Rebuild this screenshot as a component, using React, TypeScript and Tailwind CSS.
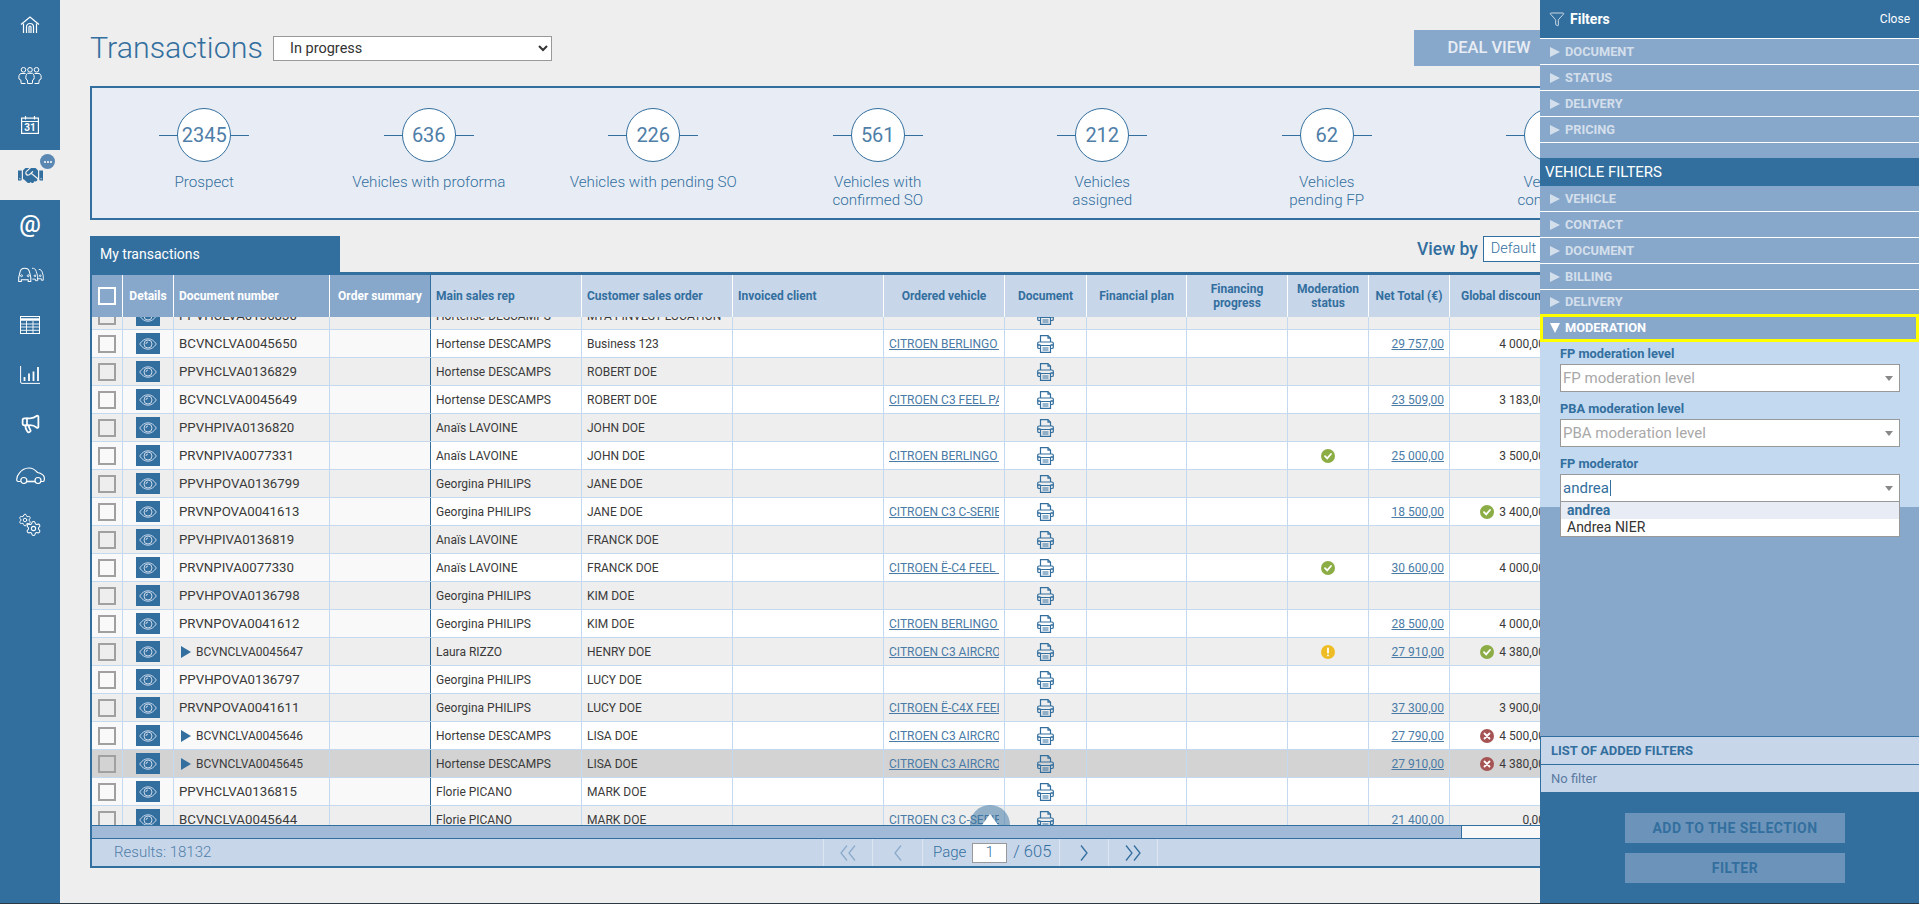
import { FaHandshake } from "react-icons/fa";
import { Filter, Megaphone, Settings } from "lucide-react";

const stats = [
  { n: "2345", l: ["Prospect"] },
  { n: "636", l: ["Vehicles with proforma"] },
  { n: "226", l: ["Vehicles with pending SO"] },
  { n: "561", l: ["Vehicles with", "confirmed SO"] },
  { n: "212", l: ["Vehicles", "assigned"] },
  { n: "62", l: ["Vehicles", "pending FP"] },
  { n: "48", l: ["Vehicles", "confirmed"] },
];

const HORTENSE = "Hortense DESCAMPS";
const ANAIS = "Anaïs LAVOINE";
const GEORGINA = "Georgina PHILIPS";

type Row = {
  doc: string;
  rep: string;
  client: string;
  vehicle?: string;
  net?: string;
  mod?: "ok" | "warn";
  disc?: string;
  discIcon?: "ok" | "ko";
  tree?: boolean;
  active?: boolean;
};

const rows: Row[] = [
  { doc: "PPVHCLVA0136830", rep: HORTENSE, client: "MTA FINVEST LOCATION" },
  { doc: "BCVNCLVA0045650", rep: HORTENSE, client: "Business 123", vehicle: "CITROEN BERLINGO VAN", net: "29 757,00", disc: "4 000,00" },
  { doc: "PPVHCLVA0136829", rep: HORTENSE, client: "ROBERT DOE" },
  { doc: "BCVNCLVA0045649", rep: HORTENSE, client: "ROBERT DOE", vehicle: "CITROEN C3 FEEL PACK", net: "23 509,00", disc: "3 183,00" },
  { doc: "PPVHPIVA0136820", rep: ANAIS, client: "JOHN DOE" },
  { doc: "PRVNPIVA0077331", rep: ANAIS, client: "JOHN DOE", vehicle: "CITROEN BERLINGO VAN", mod: "ok", net: "25 000,00", disc: "3 500,00" },
  { doc: "PPVHPOVA0136799", rep: GEORGINA, client: "JANE DOE" },
  { doc: "PRVNPOVA0041613", rep: GEORGINA, client: "JANE DOE", vehicle: "CITROEN C3 C-SERIES", net: "18 500,00", disc: "3 400,00", discIcon: "ok" },
  { doc: "PPVHPIVA0136819", rep: ANAIS, client: "FRANCK DOE" },
  { doc: "PRVNPIVA0077330", rep: ANAIS, client: "FRANCK DOE", vehicle: "CITROEN Ë-C4 FEEL PACK", mod: "ok", net: "30 600,00", disc: "4 000,00" },
  { doc: "PPVHPOVA0136798", rep: GEORGINA, client: "KIM DOE" },
  { doc: "PRVNPOVA0041612", rep: GEORGINA, client: "KIM DOE", vehicle: "CITROEN BERLINGO VAN", net: "28 500,00", disc: "4 000,00" },
  { doc: "BCVNCLVA0045647", tree: true, rep: "Laura RIZZO", client: "HENRY DOE", vehicle: "CITROEN C3 AIRCROSS", mod: "warn", net: "27 910,00", disc: "4 380,00", discIcon: "ok" },
  { doc: "PPVHPOVA0136797", rep: GEORGINA, client: "LUCY DOE" },
  { doc: "PRVNPOVA0041611", rep: GEORGINA, client: "LUCY DOE", vehicle: "CITROEN Ë-C4X FEEL PACK", net: "37 300,00", disc: "3 900,00" },
  { doc: "BCVNCLVA0045646", tree: true, rep: HORTENSE, client: "LISA DOE", vehicle: "CITROEN C3 AIRCROSS", net: "27 790,00", disc: "4 500,00", discIcon: "ko" },
  { doc: "BCVNCLVA0045645", tree: true, active: true, rep: HORTENSE, client: "LISA DOE", vehicle: "CITROEN C3 AIRCROSS", net: "27 910,00", disc: "4 380,00", discIcon: "ko" },
  { doc: "PPVHCLVA0136815", rep: "Florie PICANO", client: "MARK DOE" },
  { doc: "BCVNCLVA0045644", rep: "Florie PICANO", client: "MARK DOE", vehicle: "CITROEN C3 C-SERIES", net: "21 400,00", disc: "0,00" },
];

function HomeIcon() {
  return (
    <svg width="20" height="18" viewBox="0 0 20 18" fill="none" stroke="#fff" strokeWidth="1.2">
      <path d="M1 8.500 10 1l9 7.500" />
      <path d="M3.500 7.500V17M16.500 7.500V17M6.500 17V11a3.500 3.500 0 0 1 7 0v6M9 17v-6a1 1 0 0 1 2 0v6" />
    </svg>
  );
}

function PeopleIcon() {
  return (
    <svg width="24" height="17" viewBox="0 0 24 17" fill="none" stroke="#fff" strokeWidth="1">
      <circle cx="5.500" cy="2.800" r="2.300" />
      <circle cx="12" cy="2.800" r="2.300" />
      <circle cx="18.500" cy="2.800" r="2.300" />
      <path d="M7.500 6.500H3C1 7 .5 9.500 1 12l1.800 1 .4 3.500h4.300" />
      <path d="M9.500 6.300h5C16 7 16.500 10 16 12l-1.300 1-.4 3.500H9.700L9.300 13 8 12C7.500 10 8 7 9.500 6.300z" />
      <path d="M16.500 6.500H21C23 7 23.500 9.500 23 12l-1.800 1-.4 3.500h-4.300" />
    </svg>
  );
}

function CalendarIcon() {
  return (
    <svg width="18" height="18" viewBox="0 0 18 18" fill="none" stroke="#fff">
      <rect x="0.600" y="2.100" width="16.800" height="15.300" strokeWidth="1.200" />
      <path d="M.6 5.500h16.800M4.500 0v3.500M13.500 0v3.500" strokeWidth="1.200" />
      <text x="9" y="15.300" textAnchor="middle" fill="#fff" stroke="none" fontSize="10" fontWeight="700" fontFamily="Roboto">
        31
      </text>
    </svg>
  );
}

function CarsIcon() {
  const car = "M2 17v-5l1.500-6C4 3 6 1.500 9 1.500S14 3 14.500 6l1.500 6v5h-3v-2H5v2z";
  return (
    <svg width="27" height="18" viewBox="0 0 36 24" fill="none" stroke="#fff" strokeWidth="1.200">
      <path d="M29 4.500c2.500 0 4 1.500 4.500 3.500l1.500 5v6h-2.500v-2H27" />
      <path d="M20 3c3 0 5 1 5.500 4l2 6v6.500h-3v-2h-4" />
      <path d={car} transform="scale(1.150) translate(0 1)" />
      <circle cx="6" cy="13" r="1.300" />
      <circle cx="15" cy="13" r="1.300" />
      <circle cx="24" cy="13" r="1.100" />
      <circle cx="31" cy="13" r="1.100" />
    </svg>
  );
}

function TableIcon() {
  return (
    <svg width="20" height="18" viewBox="0 0 20 18" fill="none" stroke="#fff">
      <rect x="0.500" y="0.500" width="19" height="17" strokeWidth="1" />
      <path d="M.5 3.500h19" strokeWidth="2.500" />
      <path d="M.5 8h19M.5 11h19M.5 14.300h19M6.500 5v13M13 5v13" strokeWidth="0.900" />
    </svg>
  );
}

function ChartIcon() {
  return (
    <svg width="20" height="18" viewBox="0 0 20 18" fill="none" stroke="#fff">
      <path d="M.6 0v16a1.400 1.400 0 0 0 1.400 1.400h18" strokeWidth="1" />
      <path d="M4.500 11v4M9 7.500V15M13.500 5.500V15M18 1v14" strokeWidth="1.800" />
    </svg>
  );
}

function CarIcon() {
  return (
    <svg width="29" height="17" viewBox="0 0 29 17" fill="none" stroke="#fff" strokeWidth="1.200">
      <path d="M4.500 14.500H2.300C1 14.500.6 13.500.8 12c.2-2 .6-3.800 2-5.200C5 3.500 8.500 1 13 1c3.500 0 6 1.500 8.500 4.500 3 .7 6 1.800 6.700 4.500.3 1.500.4 4.500-1.300 4.500h-1.900" />
      <path d="M11 14.500h8" strokeWidth="1.600" />
      <circle cx="7.800" cy="13.500" r="3" />
      <circle cx="22" cy="13.500" r="3" />
    </svg>
  );
}

function GearsIcon() {
  return (
    <svg width="24" height="24" viewBox="0 0 24 24" fill="none">
      <Settings size={14} x={0} y={0} color="#fff" strokeWidth={1.600} />
      <Settings size={17} x={7} y={7} color="#fff" strokeWidth={1.500} />
    </svg>
  );
}

function EyeIcon() {
  return (
    <svg width="18" height="12" viewBox="0 0 18 12" fill="none" stroke="#c8d6ea" strokeWidth="1">
      <path d="M.7 6C3 2.500 5.800.8 9 .8s6 1.700 8.300 5.200C15 9.500 12.200 11.200 9 11.200S3 9.500.7 6z" />
      <circle cx="9" cy="6" r="4" />
      <path d="M7 6a2 2 0 0 1 2-2" />
    </svg>
  );
}

function PrintIcon() {
  return (
    <svg width="17" height="18" viewBox="0 0 17 18" fill="none" stroke="#336f9e" strokeWidth="1.200">
      <path d="M3.500 7V.7h7.500l2.500 2.500V7" />
      <path d="M11 .7v2.500h2.500" />
      <path d="M3.500 13.500H2A1.300 1.300 0 0 1 .7 12.200V8.300A1.300 1.300 0 0 1 2 7h13a1.300 1.300 0 0 1 1.300 1.300v3.900a1.300 1.300 0 0 1-1.300 1.300h-1.500" />
      <path d="M3.500 10.500h10v6.800h-10z" />
      <path d="M5.500 13h6M5.500 15h6" />
      <path d="M.7 10h2.800M13.500 10h2.800" strokeWidth="1.500" />
    </svg>
  );
}

function StatusIcon({ kind }: { kind: "ok" | "warn" | "ko" }) {
  const bg = kind === "ok" ? "bg-[#8cad46]" : kind === "warn" ? "bg-[#eebc24]" : "bg-[#a55353]";
  return (
    <span className={`inline-flex h-[14px] w-[14px] shrink-0 items-center justify-center rounded-full ${bg}`}>
      <svg width="10" height="10" viewBox="0 0 10 10" fill="none" stroke="#fff" strokeWidth="1.800" strokeLinecap="round">
        {kind === "ok" && <path d="M2 5.200 4.200 7.400 8 3" />}
        {kind === "warn" && <path d="M5 1.500v4.200M5 8.300v.1" />}
        {kind === "ko" && <path d="M2.500 2.500l5 5M7.500 2.500l-5 5" />}
      </svg>
    </span>
  );
}

function Chevrons({ dir, double, faded }: { dir: "left" | "right"; double?: boolean; faded?: boolean }) {
  const d = dir === "left" ? "M8 .5 2 8l6 7.500" : "M2 .5 8 8l-6 7.500";
  return (
    <svg
      width={double ? 18 : 10}
      height="16"
      viewBox={double ? "0 0 18 16" : "0 0 10 16"}
      fill="none"
      stroke="#336f9e"
      strokeWidth="1.300"
      className={faded ? "opacity-40" : ""}
    >
      <path d={d} />
      {double && <path d={d} transform="translate(8 0)" />}
    </svg>
  );
}

function FilterHead({ label, open, h = "h-[26px]" }: { label: string; open?: boolean; h?: string }) {
  return (
    <div
      className={
        open
          ? "flex h-[28px] shrink-0 items-center gap-[5px] border-[3px] border-[#ffff00] pl-[7px] text-[12.800px] font-bold text-white"
          : `flex ${h} shrink-0 items-center gap-[5px] border-b border-white pl-[10px] text-[12.800px] font-bold text-[#d4dfec]`
      }
    >
      {open ? (
        <svg width="10" height="10" viewBox="0 0 10 10" fill="#fff">
          <path d="M0 0h10L5 10z" />
        </svg>
      ) : (
        <svg width="10" height="10" viewBox="0 0 10 10" fill="#d4dfec">
          <path d="M0 0l10 5-10 5z" />
        </svg>
      )}
      {label}
    </div>
  );
}

function ComboField({ label, value, placeholder }: { label: string; value?: string; placeholder?: boolean }) {
  return (
    <div className="relative mb-[9px] last:mb-0">
      <div className="mb-[2px] h-4 text-[12.800px] leading-4 font-bold text-[#336f9e]">{label}</div>
      <div className="flex h-[28px] items-center justify-between border border-[#999] bg-white pr-[5px] pl-[2px] text-[15px] leading-none">
        <span className={placeholder ? "text-[#a8a8a8]" : "flex items-center text-[#336f9e]"}>
          {value}
          {!placeholder && <span className="ml-px inline-block h-[16px] w-px bg-[#336f9e]" />}
        </span>
        <svg width="8" height="5" viewBox="0 0 8 5" fill="#888" className="mr-[1px]">
          <path d="M0 0h8L4 5z" />
        </svg>
      </div>
    </div>
  );
}

const headCell = "flex items-center h-full border-r border-white px-[5px] leading-[14px]";
const bodyCell = "flex items-center h-full border-r border-[#c5d9ee] overflow-hidden";

function TableHead() {
  return (
    <div className="flex h-[42px] shrink-0 text-[12px] font-bold">
      <div className="flex text-white">
        <div className={`${headCell} w-[31px] justify-start bg-[#88a8cb]`}>
          <span className="ml-px block h-[18px] w-[18px] border-2 border-white" />
        </div>
        <div className={`${headCell} w-[51px] justify-center bg-[#88a8cb]`}>Details</div>
        <div className={`${headCell} w-[156px] bg-[#88a8cb]`}>Document number</div>
        <div className={`${headCell} w-[101px] justify-center border-r-[#336f9e] bg-[#88a8cb] whitespace-nowrap`}>Order summary</div>
      </div>
      <div className="flex flex-1 bg-[#c8d6ea] text-[#336f9e]">
        <div className={`${headCell} w-[151px]`}>Main sales rep</div>
        <div className={`${headCell} w-[151px]`}>Customer sales order</div>
        <div className={`${headCell} w-[151px]`}>Invoiced client</div>
        <div className={`${headCell} w-[121px] justify-center`}>Ordered vehicle</div>
        <div className={`${headCell} w-[82px] justify-center`}>Document</div>
        <div className={`${headCell} w-[100px] justify-center`}>Financial plan</div>
        <div className={`${headCell} w-[101px] justify-center text-center`}>Financing progress</div>
        <div className={`${headCell} w-[81px] justify-center text-center`}>Moderation status</div>
        <div className={`${headCell} w-[81px] justify-center whitespace-nowrap`}>Net Total (€)</div>
        <div className={`${headCell} w-[107px] justify-center whitespace-nowrap`}>Global discount</div>
      </div>
    </div>
  );
}

function TableRow({ row, index }: { row: Row; index: number }) {
  const even = index % 2 === 0;
  const frozen = row.active ? "bg-[#d3d3d3]" : even ? "bg-[#eeeeee]" : "bg-[#f9f9f9]";
  const rest = row.active ? "bg-[#d3d3d3]" : even ? "bg-[#eeeeee]" : "bg-white";
  return (
    <div className="flex h-[28px] shrink-0 border-b border-[#c5d9ee] text-[12px] text-[#3a3a3a]">
      <div className={`flex ${frozen}`}>
        <div className={`${bodyCell} w-[31px] pl-[6px]`}>
          <span className="block h-[18px] w-[18px] border-2 border-[#a0a0a0]" />
        </div>
        <div className={`${bodyCell} w-[51px] justify-center`}>
          <span className="flex h-[21px] w-[24px] items-center justify-center bg-[#336f9e]">
            <EyeIcon />
          </span>
        </div>
        <div className={`${bodyCell} w-[156px] ${row.tree ? "text-[12px]" : "text-[13.250px]"} pl-[5px]`}>
          {row.tree && (
            <svg width="10" height="12" viewBox="0 0 10 12" fill="#336f9e" className="mr-[5px] ml-[2px]">
              <path d="M0 0l10 6-10 6z" />
            </svg>
          )}
          {row.doc}
        </div>
        <div className={`${bodyCell} w-[101px] border-r-[#336f9e]`} />
      </div>
      <div className={`flex flex-1 ${rest}`}>
        <div className={`${bodyCell} w-[151px] px-[5px] whitespace-nowrap`}>{row.rep}</div>
        <div className={`${bodyCell} w-[151px] px-[5px] whitespace-nowrap`}>{row.client}</div>
        <div className={`${bodyCell} w-[151px]`} />
        <div className={`${bodyCell} w-[121px] px-[5px]`}>
          {row.vehicle && <span className="block w-full overflow-hidden whitespace-nowrap text-[#4a7ba6] underline">{row.vehicle}</span>}
        </div>
        <div className={`${bodyCell} w-[82px] justify-center`}>
          <PrintIcon />
        </div>
        <div className={`${bodyCell} w-[100px]`} />
        <div className={`${bodyCell} w-[101px]`} />
        <div className={`${bodyCell} w-[81px] justify-center`}>{row.mod && <StatusIcon kind={row.mod} />}</div>
        <div className={`${bodyCell} w-[81px] justify-end pr-[5px] text-[#4a7ba6] underline`}>{row.net}</div>
        <div className={`${bodyCell} w-[107px] justify-end gap-[5px] pr-[11px]`}>
          {row.discIcon && <StatusIcon kind={row.discIcon} />}
          {row.disc}
        </div>
      </div>
    </div>
  );
}

export default function App() {
  return (
    <div className="relative flex h-[904px] w-[1919px] overflow-hidden bg-[#eeeeee] font-[Roboto,sans-serif] text-[#333]">
      {/* sidebar */}
      <aside className="flex w-[60px] shrink-0 flex-col bg-[#336f9e] text-white">
        <div className="flex h-[50px] items-center justify-center"><HomeIcon /></div>
        <div className="flex h-[50px] items-center justify-center"><PeopleIcon /></div>
        <div className="flex h-[50px] items-center justify-center"><CalendarIcon /></div>
        <div className="relative flex h-[50px] items-center justify-center bg-[#eeeeee] text-[#336f9e]">
          <FaHandshake size={25} />
          <span className="absolute top-[4px] left-[40px] flex h-[15px] w-[15px] items-center justify-center gap-px rounded-full bg-[#5b88b3]">
            <span className="h-[2px] w-[2px] rounded-full bg-white" />
            <span className="h-[2px] w-[2px] rounded-full bg-white" />
            <span className="h-[2px] w-[2px] rounded-full bg-white" />
          </span>
        </div>
        <div className="flex h-[50px] items-center justify-center pb-[3px] text-[24px] leading-none font-medium">@</div>
        <div className="flex h-[50px] items-center justify-center"><CarsIcon /></div>
        <div className="flex h-[50px] items-center justify-center"><TableIcon /></div>
        <div className="flex h-[50px] items-center justify-center"><ChartIcon /></div>
        <div className="flex h-[50px] items-center justify-center pb-[3px]"><Megaphone size={21} strokeWidth={2} /></div>
        <div className="flex h-[50px] items-center justify-center"><CarIcon /></div>
        <div className="flex h-[50px] items-center justify-center pb-px"><GearsIcon /></div>
      </aside>

      {/* main */}
      <main className="ml-[30px] flex w-[1815px] shrink-0 flex-col">
        <div className="mt-[30px] flex h-[36px] items-center">
          <h1 className="w-[183px] text-[30.400px] font-light whitespace-nowrap text-[#336f9e]">Transactions</h1>
          <select
            defaultValue="In progress"
            className="h-[25px] w-[279px] border border-[#999] bg-white pl-[12px] text-[14.500px] text-[#333]"
          >
            <option>In progress</option>
          </select>
          <button className="ml-[862px] h-[36px] w-[150px] bg-[#88a8cb] text-[16.500px] font-medium text-[#e8edf5]">DEAL VIEW</button>
        </div>

        <section className="mt-[20px] flex h-[134px] border-2 border-[#336f9e] bg-[#e8edf5]">
          {stats.map((s) => (
            <div key={s.n} className="flex w-[224.500px] shrink-0 flex-col items-center pt-[20px]">
              <div className="relative flex h-[54px] w-[90px] items-center justify-center">
                <span className="absolute top-1/2 right-0 left-0 h-px bg-[#336f9e]" />
                <span className="relative flex h-[54px] w-[54px] items-center justify-center rounded-full border border-[#336f9e] bg-white text-[20px] text-[#4f7ea8]">
                  {s.n}
                </span>
              </div>
              <div className="mt-[11px] text-center text-[15.200px] leading-[18px] font-light text-[#336f9e]">
                {s.l.map((line) => (
                  <div key={line}>{line}</div>
                ))}
              </div>
            </div>
          ))}
        </section>

        <div className="mt-[16px] flex h-[36px]">
          <div className="flex w-[250px] items-center bg-[#336f9e] pl-[10px] text-[14px] text-white">My transactions</div>
          <div className="ml-[1077px] flex h-[26px] items-center gap-[5px]">
            <span className="text-[17.500px] font-medium text-[#336f9e]">View by</span>
            <span className="flex h-[26px] w-[200px] items-center border border-[#336f9e] bg-white pl-[7px] text-[14.500px] font-light text-[#336f9e]">Default</span>
          </div>
        </div>

        {/* table */}
        <section className="flex h-[596px] flex-col border-x-2 border-t-[3px] border-b-2 border-[#336f9e]">
          <TableHead />
          <div className="relative flex h-[508px] shrink-0 flex-col overflow-hidden">
            <div className="-mt-[15px] flex flex-col">
              {rows.map((r, i) => (
                <TableRow key={r.doc} row={r} index={i} />
              ))}
            </div>
            <span className="absolute top-[488px] left-[878px] flex h-[40px] w-[40px] justify-center rounded-full bg-[#336f9e]/50 pt-[9px]">
              <svg width="16" height="11" viewBox="0 0 16 11" fill="#fff">
                <path d="M8 0l8 11H0z" />
              </svg>
            </span>
          </div>
          <div className="flex h-[13px] shrink-0 border-t border-[#336f9e] bg-[#f8f8f8]">
            <div className="h-full w-[1370px] border-r border-[#336f9e] bg-[#a0bad7]" />
          </div>
          <div className="flex h-[28px] shrink-0 items-stretch border-t border-[#336f9e] bg-[#c8d6ea] text-[15px] font-light text-[#336f9e]">
            <div className="flex w-[731px] items-center pl-[22px] text-[#4f7ea8]">Results: 18132</div>
            <div className="flex w-[49px] items-center justify-center border-l border-[#dde5f1]"><Chevrons dir="left" double faded /></div>
            <div className="flex w-[50px] items-center justify-center border-l border-[#dde5f1]"><Chevrons dir="left" faded /></div>
            <div className="flex w-[137px] items-center border-l border-[#dde5f1] pl-[10px]">
              Page
              <span className="mx-[6px] flex h-[20px] w-[35px] items-center justify-center border border-[#999] bg-white">1</span>
              <span className="text-[16.500px]">/ 605</span>
            </div>
            <div className="flex w-[49px] items-center justify-center border-l border-[#dde5f1]"><Chevrons dir="right" /></div>
            <div className="flex w-[50px] items-center justify-center border-x border-[#dde5f1]"><Chevrons dir="right" double /></div>
          </div>
        </section>
      </main>

      {/* filters panel */}
      <aside className="absolute top-0 right-0 bottom-0 flex w-[379px] flex-col bg-[#88a8cb]">
        <div className="flex h-[39px] shrink-0 items-center justify-between border-b border-white bg-[#336f9e] pr-[9px] pl-[9px] text-white">
          <span className="flex items-center gap-[5px] text-[14px] font-bold">
            <Filter size={16} strokeWidth={1.100} />
            Filters
          </span>
          <span className="text-[12px]">Close</span>
        </div>
        <FilterHead label="DOCUMENT" />
        <FilterHead label="STATUS" />
        <FilterHead label="DELIVERY" />
        <FilterHead label="PRICING" />
        <div className="h-[15px] shrink-0" />
        <div className="flex h-[28px] shrink-0 items-center bg-[#336f9e] pl-[5px] text-[15px] text-white">VEHICLE FILTERS</div>
        <FilterHead label="VEHICLE" />
        <FilterHead label="CONTACT" />
        <FilterHead label="DOCUMENT" />
        <FilterHead label="BILLING" />
        <FilterHead label="DELIVERY" h="h-[24px] border-b-0" />
        <FilterHead label="MODERATION" open />
        <div className="h-[165px] shrink-0 bg-[#c2d9f0] pt-[4px] pr-[19px] pl-[20px]">
          <ComboField label="FP moderation level" value="FP moderation level" placeholder />
          <ComboField label="PBA moderation level" value="PBA moderation level" placeholder />
          <div className="relative">
            <ComboField label="FP moderator" value="andrea" />
            <div className="absolute top-full right-0 left-0 z-10 border border-t-0 border-[#999] bg-white text-[14px] leading-[17px]">
              <div className="bg-[#e8edf5] pl-[6px] font-bold text-[#336f9e]">andrea</div>
              <div className="pl-[6px] text-[#333]">Andrea NIER</div>
            </div>
          </div>
        </div>
        <div className="flex-1" />
        <div className="shrink-0 border-t border-l border-[#336f9e] bg-[#c8d6ea]">
          <div className="flex h-[28px] items-center border-b border-[#336f9e] pl-[10px] text-[13px] font-bold text-[#336f9e]">LIST OF ADDED FILTERS</div>
          <div className="flex h-[27px] items-center pl-[10px] text-[13px] text-[#5a7ba0]">No filter</div>
        </div>
        <div className="flex h-[112px] shrink-0 flex-col items-center gap-[10px] bg-[#336f9e] pt-[21px] pl-[11px]">
          <button className="h-[30px] w-[220px] bg-[#6c94ba] text-[14px] font-bold tracking-[0.5px] text-[#336f9e]">ADD TO THE SELECTION</button>
          <button className="h-[30px] w-[220px] bg-[#6c94ba] text-[14px] font-bold tracking-[0.5px] text-[#336f9e]">FILTER</button>
        </div>
      </aside>

      <div className="absolute right-0 bottom-0 left-0 h-px bg-[#2b3a42]" />
    </div>
  );
}
